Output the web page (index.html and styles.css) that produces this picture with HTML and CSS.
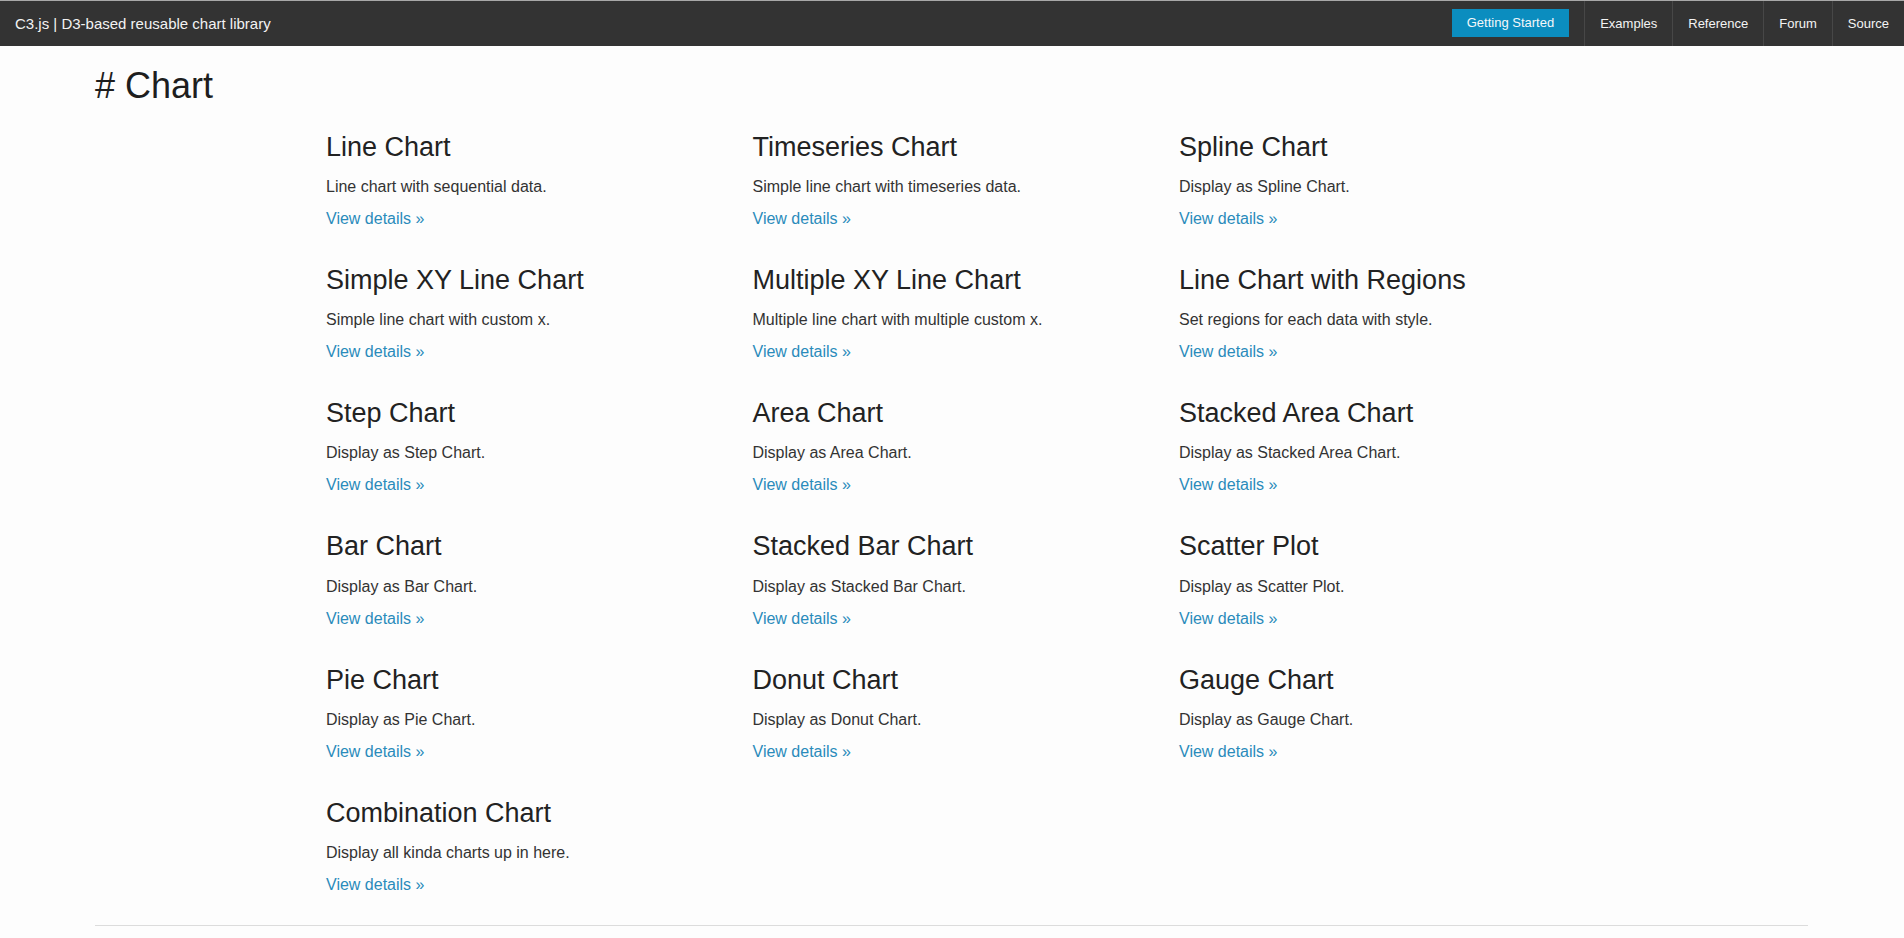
FILE: index.html
```html
<!DOCTYPE html>
<html lang="en">
<head>
<meta charset="utf-8">
<title>C3.js | D3-based reusable chart library</title>
<link rel="stylesheet" href="styles.css">
</head>
<body>
<header class="navbar">
  <a class="brand" href="#">C3.js | D3-based reusable chart library</a>
  <nav class="nav">
    <a class="btn-start" href="#">Getting Started</a>
    <a class="nav-link" href="#">Examples</a>
    <a class="nav-link" href="#">Reference</a>
    <a class="nav-link" href="#">Forum</a>
    <a class="nav-link" href="#">Source</a>
  </nav>
</header>
<main class="container">
  <h1 class="title"># Chart</h1>
  <div class="grid">
    <div class="card"><h2>Line Chart</h2><p class="desc">Line chart with sequential data.</p><p class="more"><a href="#">View details &raquo;</a></p></div>
    <div class="card"><h2>Timeseries Chart</h2><p class="desc">Simple line chart with timeseries data.</p><p class="more"><a href="#">View details &raquo;</a></p></div>
    <div class="card"><h2>Spline Chart</h2><p class="desc">Display as Spline Chart.</p><p class="more"><a href="#">View details &raquo;</a></p></div>
    <div class="card"><h2>Simple XY Line Chart</h2><p class="desc">Simple line chart with custom x.</p><p class="more"><a href="#">View details &raquo;</a></p></div>
    <div class="card"><h2>Multiple XY Line Chart</h2><p class="desc">Multiple line chart with multiple custom x.</p><p class="more"><a href="#">View details &raquo;</a></p></div>
    <div class="card"><h2>Line Chart with Regions</h2><p class="desc">Set regions for each data with style.</p><p class="more"><a href="#">View details &raquo;</a></p></div>
    <div class="card"><h2>Step Chart</h2><p class="desc">Display as Step Chart.</p><p class="more"><a href="#">View details &raquo;</a></p></div>
    <div class="card"><h2>Area Chart</h2><p class="desc">Display as Area Chart.</p><p class="more"><a href="#">View details &raquo;</a></p></div>
    <div class="card"><h2>Stacked Area Chart</h2><p class="desc">Display as Stacked Area Chart.</p><p class="more"><a href="#">View details &raquo;</a></p></div>
    <div class="card"><h2>Bar Chart</h2><p class="desc">Display as Bar Chart.</p><p class="more"><a href="#">View details &raquo;</a></p></div>
    <div class="card"><h2>Stacked Bar Chart</h2><p class="desc">Display as Stacked Bar Chart.</p><p class="more"><a href="#">View details &raquo;</a></p></div>
    <div class="card"><h2>Scatter Plot</h2><p class="desc">Display as Scatter Plot.</p><p class="more"><a href="#">View details &raquo;</a></p></div>
    <div class="card"><h2>Pie Chart</h2><p class="desc">Display as Pie Chart.</p><p class="more"><a href="#">View details &raquo;</a></p></div>
    <div class="card"><h2>Donut Chart</h2><p class="desc">Display as Donut Chart.</p><p class="more"><a href="#">View details &raquo;</a></p></div>
    <div class="card"><h2>Gauge Chart</h2><p class="desc">Display as Gauge Chart.</p><p class="more"><a href="#">View details &raquo;</a></p></div>
    <div class="card"><h2>Combination Chart</h2><p class="desc">Display all kinda charts up in here.</p><p class="more"><a href="#">View details &raquo;</a></p></div>
  </div>
  <hr class="rule">
</main>
</body>
</html>
```
FILE: styles.css
```css
* { box-sizing: border-box; }
html, body { margin: 0; padding: 0; }
body {
  font-family: "Liberation Sans", Arial, sans-serif;
  background: #fdfdfd;
  color: #333;
  border-top: 1px solid #a8a8a8;
  overflow: hidden;
}
a { text-decoration: none; }

.navbar {
  height: 45px;
  background: #333;
  display: flex;
  align-items: stretch;
  justify-content: space-between;
}
.brand {
  color: #f2f2f2;
  font-size: 15px;
  padding-left: 15px;
  display: flex;
  align-items: center;
  line-height: 1;
  white-space: nowrap;
}
.nav {
  display: flex;
  align-items: stretch;
}
.btn-start {
  align-self: center;
  margin-top: -2px;
  height: 28px;
  display: flex;
  align-items: center;
  justify-content: center;
  padding: 0 15px;
  margin-right: 15px;
  background: #0b8dbf;
  color: #f4f8fa;
  font-size: 13px;
  white-space: nowrap;
}
.nav-link {
  display: flex;
  align-items: center;
  padding: 0 15px;
  border-left: 1px solid #474747;
  color: #f4f4f4;
  font-size: 13px;
  white-space: nowrap;
}

.container {
  width: 1713px;
  margin-left: 95px;
}
.title {
  font-size: 36px;
  font-weight: 400;
  line-height: 39.6px;
  color: #1e1e1e;
  margin: 19.7px 0 26.5px;
}
.grid {
  margin-left: 231px;
  display: grid;
  grid-template-columns: repeat(3, 426.5px);
  row-gap: 35px;
}
.card h2 {
  font-size: 27px;
  font-weight: 400;
  line-height: 29.7px;
  color: #222;
  margin: 1px 0 13.5px;
}
.card p {
  font-size: 16px;
  line-height: 22px;
  margin: 0;
}
.card .desc {
  color: #333;
  margin-bottom: 10px;
}
.card .more a {
  color: #2a8bbb;
}
.rule {
  border: 0;
  border-top: 1px solid #dcdcdc;
  margin: 29px 0 0;
  height: 0;
}
```
